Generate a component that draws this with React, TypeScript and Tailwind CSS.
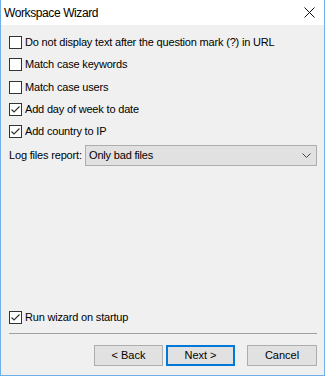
import React from "react";

type CheckRowProps = {
  label: string;
  checked?: boolean;
  className?: string;
};

function CheckBox({ checked }: { checked?: boolean }) {
  return (
    <span className="flex h-[13px] w-[13px] shrink-0 items-center justify-center border border-[#333333] bg-white">
      {checked ? (
        <svg width="11" height="11" viewBox="0 0 11 11" fill="none">
          <path d="M1.5 5.5 L4 8 L9.5 2.5" stroke="#333333" strokeWidth="1.2" />
        </svg>
      ) : null}
    </span>
  );
}

function CheckRow({ label, checked, className }: CheckRowProps) {
  return (
    <div className={`flex items-center gap-[3px] ${className ?? "h-[22px]"}`}>
      <CheckBox checked={checked} />
      <span className="text-[11px] tracking-[-0.18px] text-black">{label}</span>
    </div>
  );
}

export default function App() {
  return (
    <div className="flex h-[376px] w-[325px] flex-col border-x border-b border-[#6fb0ea] bg-[#f0f0f0] font-['Liberation_Sans',Arial,sans-serif]">
      {/* title bar */}
      <div className="flex h-[25px] items-center justify-between bg-white pl-[3px] pr-[9px]">
        <span className="text-[12px] tracking-[-0.4px] text-black">Workspace Wizard</span>
        <svg width="11" height="11" viewBox="0 0 11 11" fill="none">
          <path d="M0.5 0.5 L10.5 10.5 M10.5 0.5 L0.5 10.5" stroke="#111111" strokeWidth="1" />
        </svg>
      </div>

      <div className="flex flex-1 flex-col pb-[9px] pl-[8px] pr-[7px] pt-[6px]">
        <CheckRow label="Do not display text after the question mark (?) in URL" />
        <CheckRow label="Match case keywords" className="h-[23px]" />
        <CheckRow label="Match case users" />
        <CheckRow label="Add day of week to date" checked />
        <CheckRow label="Add country to IP" checked />

        <div className="mt-[3px] flex h-[21px] items-center">
          <span className="w-[76px] shrink-0 text-[11px] tracking-[-0.18px] text-black">
            Log files report:
          </span>
          <div className="flex h-[21px] flex-1 items-center justify-between border border-[#adadad] bg-[#e1e1e1] pl-[3px] pr-[5px]">
            <span className="text-[11px] tracking-[-0.18px] text-black">Only bad files</span>
            <svg width="9" height="5" viewBox="0 0 9 5" fill="none">
              <path d="M0.5 0.5 L4.5 4.5 L8.5 0.5" stroke="#444444" strokeWidth="1" />
            </svg>
          </div>
        </div>

        <div className="flex-1" />

        <CheckRow label="Run wizard on startup" checked />
        <div className="mt-[5px] h-px bg-[#a0a0a0]" />

        <div className="mt-[11px] flex justify-end">
          <button
            type="button"
            className="h-[21px] w-[69px] border border-[#adadad] bg-[#e1e1e1] text-[11px] text-black"
          >
            &lt; Back
          </button>
          <button
            type="button"
            className="ml-[3px] h-[21px] w-[69px] border-2 border-[#0078d7] bg-[#e1e1e1] text-[11px] text-black"
          >
            Next &gt;
          </button>
          <button
            type="button"
            className="ml-[12px] h-[21px] w-[70px] border border-[#adadad] bg-[#e1e1e1] text-[11px] text-black"
          >
            Cancel
          </button>
        </div>
      </div>
    </div>
  );
}
